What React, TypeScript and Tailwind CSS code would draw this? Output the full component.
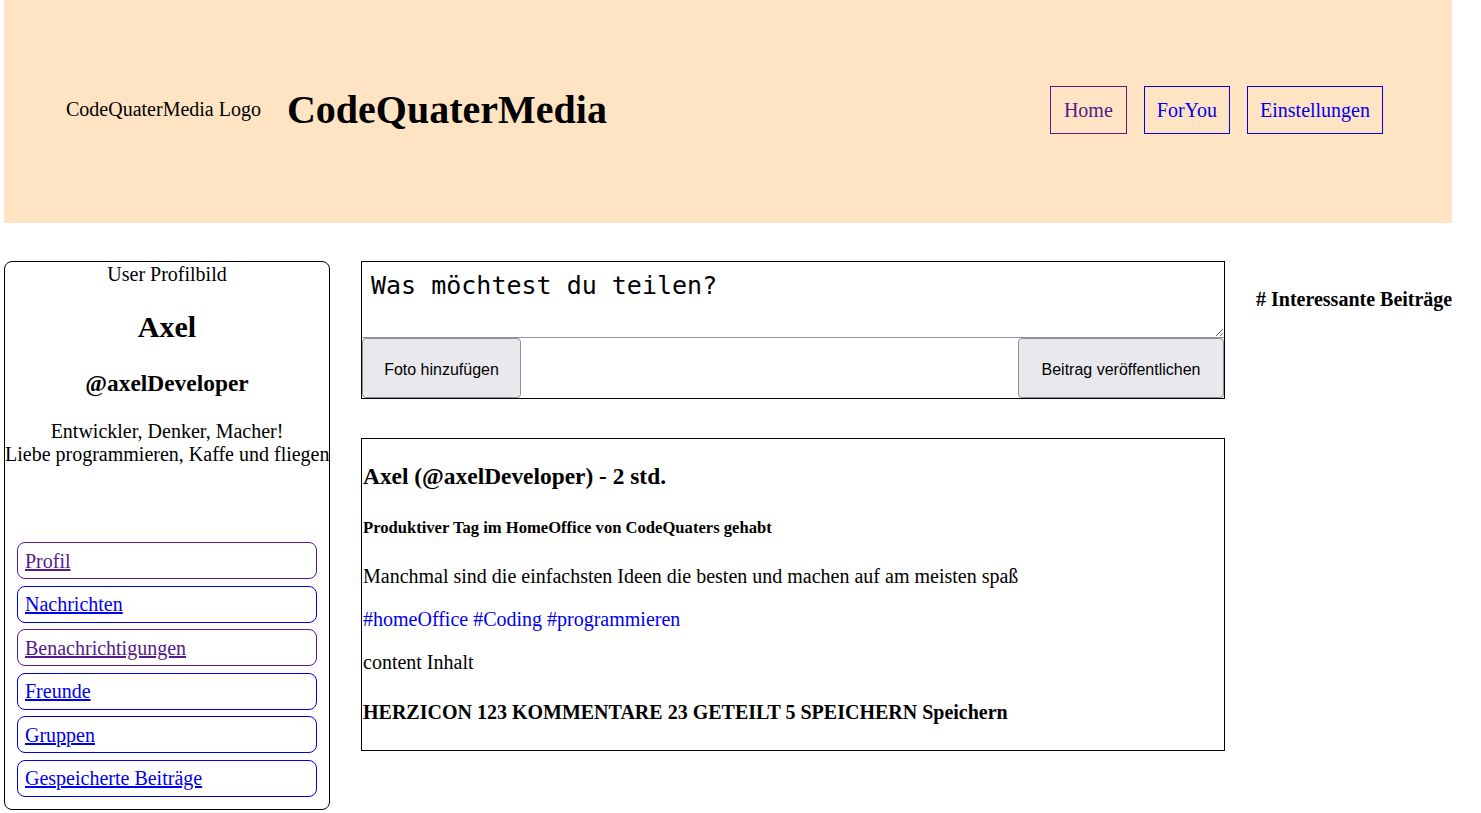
import { useState } from "react";

type NavLink = {
  label: string;
  visited: boolean;
};

const sideLinks: NavLink[] = [
  { label: "Profil", visited: true },
  { label: "Nachrichten", visited: false },
  { label: "Benachrichtigungen", visited: true },
  { label: "Freunde", visited: false },
  { label: "Gruppen", visited: false },
  { label: "Gespeicherte Beiträge", visited: false },
];

const topLinks: NavLink[] = [
  { label: "Home", visited: true },
  { label: "ForYou", visited: false },
  { label: "Einstellungen", visited: false },
];

function Header() {
  return (
    <header className="flex h-[223px] items-center bg-[#ffe4c4] pb-[4px] pl-[62px] pr-[69px]">
      <span className="text-[20px] leading-[23px]">CodeQuaterMedia Logo</span>
      <h1 className="ml-[26px] text-[40px] font-bold leading-[46px]">CodeQuaterMedia</h1>
      <nav className="ml-auto flex gap-[17px]">
        {topLinks.map((link) => (
          <a
            key={link.label}
            href="#"
            className={
              link.visited
                ? "flex h-[48px] items-center border border-[#551a8b] px-[13px] text-[20px] text-[#551a8b]"
                : "flex h-[48px] items-center border border-[#0000ee] px-3 text-[20px] text-[#0000ee]"
            }
          >
            {link.label}
          </a>
        ))}
      </nav>
    </header>
  );
}

function ProfileCard() {
  return (
    <aside className="w-[326px] shrink-0 rounded-lg border border-black pb-[12px] text-center">
      <div className="h-[24px] text-[20px] leading-[24px]">User Profilbild</div>
      <h2 className="mt-[24px] text-[30px] font-bold leading-[34px]">Axel</h2>
      <h3 className="mt-[26px] text-[23.4px] font-bold leading-[27px]">@axelDeveloper</h3>
      <p className="mt-[23px] whitespace-nowrap text-[20px] leading-[23px]">
        Entwickler, Denker, Macher!
        <br />
        Liebe programmieren, Kaffe und fliegen
      </p>
      <ul className="mx-[12px] mt-[76px] flex flex-col gap-[6.6px] text-left">
        {sideLinks.map((link) => (
          <li key={link.label}>
            <a
              href="#"
              className={
                link.visited
                  ? "flex h-[37px] items-center rounded-lg border border-[#551a8b] px-[7px] text-[20px] text-[#551a8b] underline"
                  : "flex h-[37px] items-center rounded-lg border border-[#0000ee] px-[7px] text-[20px] text-[#0000ee] underline"
              }
            >
              {link.label}
            </a>
          </li>
        ))}
      </ul>
    </aside>
  );
}

function Composer() {
  const [text, setText] = useState("");

  return (
    <form className="border border-black" onSubmit={(e) => e.preventDefault()}>
      <textarea
        value={text}
        onChange={(e) => setText(e.target.value)}
        placeholder="Was möchtest du teilen?"
        className="block h-[76px] w-full border-b border-[#8f8f9d] pl-[9px] pt-[9px] font-['DejaVu_Sans_Mono',monospace] text-[25px] leading-[29px] outline-none placeholder:text-black"
      />
      <div className="flex justify-between">
        <button
          type="button"
          className="h-[60px] w-[159px] rounded-[4px] border border-[#8f8f9d] bg-[#e9e9ed] pt-[4px] font-['Liberation_Sans',sans-serif] text-[16px] text-black"
        >
          Foto hinzufügen
        </button>
        <button
          type="submit"
          className="h-[60px] w-[206px] rounded-[4px] border border-[#8f8f9d] bg-[#e9e9ed] pt-[4px] font-['Liberation_Sans',sans-serif] text-[16px] text-black"
        >
          Beitrag veröffentlichen
        </button>
      </div>
    </form>
  );
}

function Post() {
  return (
    <article className="mt-[39px] border border-black pb-[26px] pl-[1px] pt-[24px]">
      <h3 className="text-[23.4px] font-bold leading-[27px]">Axel (@axelDeveloper) - 2 std.</h3>
      <h5 className="mt-[28px] text-[16.6px] font-bold leading-[19px]">
        Produktiver Tag im HomeOffice von CodeQuaters gehabt
      </h5>
      <p className="mt-[28px] text-[20px] leading-[23px]">
        Manchmal sind die einfachsten Ideen die besten und machen auf am meisten spaß
      </p>
      <p className="mt-[20px] text-[20px] leading-[23px] text-[#0000ee]">
        #homeOffice #Coding #programmieren
      </p>
      <p className="mt-[20px] text-[20px] leading-[23px]">content Inhalt</p>
      <h4 className="mt-[27px] text-[20px] font-bold leading-[23px]">
        HERZICON 123 KOMMENTARE 23 GETEILT 5 SPEICHERN Speichern
      </h4>
    </article>
  );
}

export default function App() {
  return (
    <div className="ml-[4px] w-[1448px] font-['Liberation_Serif',serif] text-black">
      <Header />
      <main className="mt-[38px] flex items-start gap-[31px]">
        <ProfileCard />
        <section className="w-[864px] shrink-0">
          <Composer />
          <Post />
        </section>
        <aside className="whitespace-nowrap">
          <h4 className="mt-[27px] text-[20px] font-bold leading-[23px]"># Interessante Beiträge</h4>
        </aside>
      </main>
    </div>
  );
}
